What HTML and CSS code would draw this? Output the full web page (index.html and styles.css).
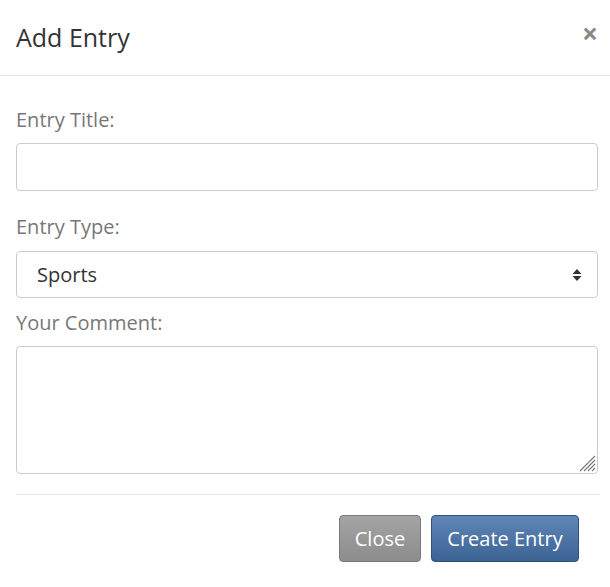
FILE: index.html
```html
<!DOCTYPE html>
<html>
<head>
<meta charset="utf-8">
<link rel="stylesheet" href="styles.css">
</head>
<body>
<div class="modal">
  <div class="modal-header">
    <h4 class="modal-title">Add Entry</h4>
    <button class="close" type="button">&times;</button>
  </div>
  <div class="modal-body">
    <div class="form-group g1">
      <label class="label">Entry Title:</label>
      <input class="form-control" type="text">
    </div>
    <div class="form-group g2">
      <label class="label">Entry Type:</label>
      <div class="select">
        <span class="select-value">Sports</span>
        <svg class="select-arrows" width="10" height="14" viewBox="0 0 10 14"><path d="M5 1 L9.5 6 H0.5 Z M0.5 8 H9.5 L5 13 Z" fill="#333"/></svg>
      </div>
    </div>
    <div class="form-group g3">
      <label class="label">Your Comment:</label>
      <div class="textarea">
        <svg class="grip" width="18" height="18" viewBox="0 0 18 18"><path d="M17 2 L2 17 M17 6 L6 17 M17 10 L10 17 M17 14 L14 17" stroke="#777" stroke-width="1.1" fill="none"/></svg>
      </div>
    </div>
  </div>
  <div class="modal-footer">
    <button class="btn btn-close" type="button">Close</button>
    <button class="btn btn-primary" type="button">Create Entry</button>
  </div>
</div>
</body>
</html>
```
FILE: styles.css
```css
html, body {
  margin: 0;
  padding: 0;
  background: #fff;
}
body {
  font-family: "Open Sans", "Noto Sans", sans-serif;
  color: #333;
}
.modal {
  width: 610px;
}
.modal-header {
  display: flex;
  align-items: center;
  justify-content: space-between;
  height: 76px;
  box-sizing: border-box;
  padding: 0 12px 0 16px;
  border-bottom: 1px solid #e5e5e5;
}
.modal-title {
  margin: 0;
  font-size: 25px;
  font-weight: 400;
  color: #333;
  line-height: 1;
}
.close {
  border: 0;
  background: none;
  padding: 0;
  font-family: "Open Sans", sans-serif;
  font-size: 28px;
  font-weight: 700;
  color: #888;
  line-height: 1;
  margin-top: -10px;
}
.modal-body {
  padding: 0 12px 0 16px;
}
.form-group {
  display: flex;
  flex-direction: column;
}
.label {
  font-size: 20px;
  color: #777;
  line-height: 24px;
}
.g1 .label {
  padding-top: 32px;
  padding-bottom: 11px;
}
.g2 .label {
  padding-top: 24px;
  padding-bottom: 12px;
}
.g3 .label {
  padding-top: 13px;
  padding-bottom: 11px;
}
.form-control {
  height: 48px;
  box-sizing: border-box;
  border: 1px solid #ccc;
  border-radius: 4px;
  margin: 0;
  padding: 0 20px;
  font-family: inherit;
  font-size: 20px;
}
.select {
  height: 47px;
  box-sizing: border-box;
  border: 1px solid #ccc;
  border-radius: 4px;
  display: flex;
  align-items: center;
  justify-content: space-between;
  padding: 0 15px 0 20px;
}
.select-value {
  font-size: 20px;
  color: #333;
}
.textarea {
  height: 128px;
  box-sizing: border-box;
  border: 1px solid #ccc;
  border-radius: 4px;
  display: flex;
  align-items: flex-end;
  justify-content: flex-end;
  padding: 0 1px 1px 0;
}
.modal-footer {
  margin: 20px 11px 0 16px;
  border-top: 1px solid #e5e5e5;
  padding-top: 20px;
  display: flex;
  justify-content: flex-end;
  gap: 10px;
  padding-right: 20px;
}
.btn {
  height: 47px;
  box-sizing: border-box;
  border-radius: 4px;
  font-family: "Open Sans", sans-serif;
  font-size: 20px;
  color: #fff;
  padding: 0 8px;
  cursor: pointer;
}
.btn-close {
  width: 82px;
  background: linear-gradient(#a4a4a4, #8c8c8c);
  border: 1px solid #7a7a7a;
}
.btn-primary {
  width: 148px;
  background: linear-gradient(#5f86b6, #3b6393);
  border: 1px solid #2f507a;
}
```
